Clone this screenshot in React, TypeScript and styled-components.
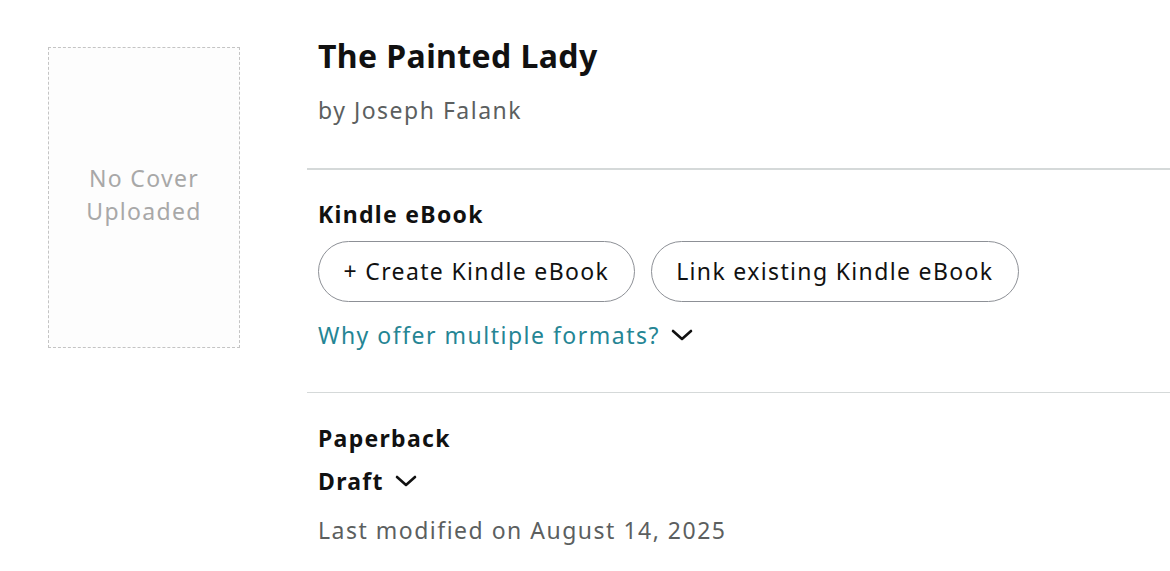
import React from "react";
import styled, { createGlobalStyle } from "styled-components";

const Global = createGlobalStyle`
  html, body { margin: 0; padding: 0; background: #ffffff; }
  body {
    font-family: "Noto Sans", "Open Sans", Arial, sans-serif;
    color: #0f1111;
    letter-spacing: 1.5px;
  }
  * { box-sizing: border-box; }
`;

const Page = styled.div`
  display: flex;
  align-items: flex-start;
  padding: 47px 0 0 48px;
  gap: 67px;
  width: 1170px;
  height: 571px;
  overflow: hidden;
`;

const Cover = styled.div`
  flex: 0 0 192px;
  height: 301px;
  border: 1.5px dashed #c4c4c4;
  background: #fdfdfd;
  display: flex;
  align-items: center;
  justify-content: center;
  text-align: center;
  color: #a8a8a8;
  font-size: 23px;
  line-height: 33px;
  letter-spacing: 1.3px;
  padding-bottom: 6px;
`;

const Main = styled.div`
  flex: 1;
  display: flex;
  flex-direction: column;
`;

const Section = styled.section<{ $top: number; $bottom: number }>`
  padding: ${(p) => p.$top}px 11px ${(p) => p.$bottom}px;
`;

const Divider = styled.hr`
  margin: 0;
  border: none;
  height: 1.5px;
  background: #d5d9d9;
`;

const TitleWrap = styled.div`
  margin-top: -3px;
`;

const Title = styled.h1`
  margin: 0;
  font-size: 32px;
  line-height: 24px;
  font-weight: 700;
  letter-spacing: 0.4px;
  color: #111;
`;

const Author = styled.div`
  margin-top: 28px;
  font-size: 23px;
  line-height: 28px;
  color: #5c5f5f;
`;

const Label = styled.div`
  font-size: 23px;
  line-height: 28px;
  font-weight: 700;
  letter-spacing: 1.3px;
  color: #111;
`;

const Buttons = styled.div`
  display: flex;
  gap: 16px;
  margin-top: 13px;
`;

const PillButton = styled.button`
  height: 61px;
  padding: 0 24.5px;
  border: 1.5px solid #8d9096;
  border-radius: 31px;
  background: #fff;
  font-family: inherit;
  letter-spacing: 1.35px;
  font-size: 23px;
  color: #111;
  cursor: pointer;
`;

const Row = styled.div<{ $gap: number }>`
  margin-top: ${(p) => p.$gap}px;
`;

const Expander = styled.div<{ $tone: "link" | "strong" }>`
  display: inline-flex;
  align-items: center;
  gap: 11px;
  font-size: 23px;
  line-height: 28px;
  font-weight: ${(p) => (p.$tone === "strong" ? 700 : 400)};
  letter-spacing: ${(p) => (p.$tone === "strong" ? "1.3px" : "1.5px")};
  color: ${(p) => (p.$tone === "link" ? "#258594" : "#111")};
`;

const Meta = styled.div`
  font-size: 23px;
  line-height: 28px;
  color: #5c5f5f;
`;

const Chevron = () => (
  <svg width="22" height="12" viewBox="0 0 22 12" fill="none">
    <path d="M2 2 L11 10 L20 2" stroke="#111" strokeWidth="2.6" strokeLinecap="round" strokeLinejoin="round" />
  </svg>
);

export default function App() {
  return (
    <>
      <Global />
      <Page>
        <Cover>
          No Cover
          <br />
          Uploaded
        </Cover>
        <Main>
          <Section $top={0} $bottom={44}>
            <TitleWrap>
              <Title>The Painted Lady</Title>
            </TitleWrap>
            <Author>by Joseph Falank</Author>
          </Section>
          <Divider />
          <Section $top={30} $bottom={43}>
            <Label>Kindle eBook</Label>
            <Buttons>
              <PillButton>+ Create Kindle eBook</PillButton>
              <PillButton>Link existing Kindle eBook</PillButton>
            </Buttons>
            <Row $gap={19}>
              <Expander $tone="link">
                Why offer multiple formats? <Chevron />
              </Expander>
            </Row>
          </Section>
          <Divider />
          <Section $top={31} $bottom={0}>
            <Label>Paperback</Label>
            <Row $gap={15}>
              <Expander $tone="strong">
                Draft <Chevron />
              </Expander>
            </Row>
            <Row $gap={21}>
              <Meta>Last modified on August 14, 2025</Meta>
            </Row>
          </Section>
        </Main>
      </Page>
    </>
  );
}
